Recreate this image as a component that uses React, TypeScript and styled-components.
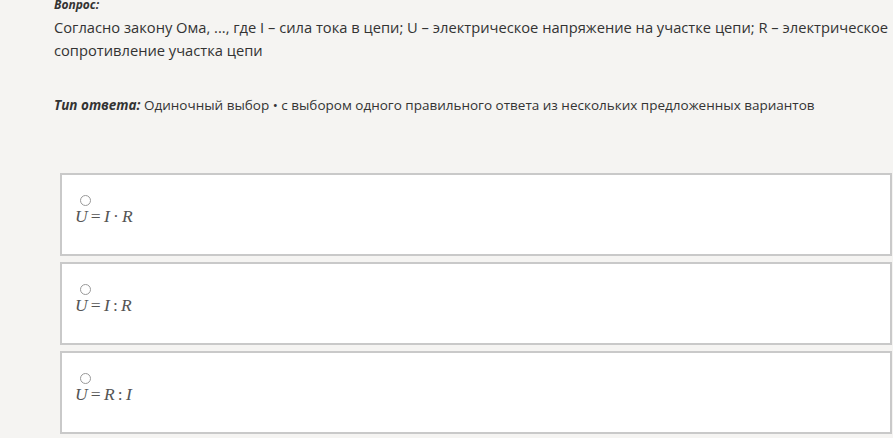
import React from "react";
import styled, { createGlobalStyle } from "styled-components";

const Global = createGlobalStyle`
  html, body { margin: 0; padding: 0; background: #f5f4f2; }
  body { overflow: hidden; }
`;

const Page = styled.div`
  width: 893px;
  height: 438px;
  background: #f5f4f2;
  font-family: "Open Sans", "Noto Sans", sans-serif;
  color: #333;
  overflow: hidden;
`;

const Header = styled.div`
  padding-left: 54px;
  margin-top: -7px;
  font-size: 14.7px;
  line-height: 23px;
`;

const Label = styled.div`
  font-weight: 700;
  font-style: italic;
  font-size: 12px;
`;

const Question = styled.div`
  white-space: nowrap;
`;

const AnswerType = styled.div`
  margin-top: 32px;
  font-size: 13.5px;
  white-space: nowrap;
  b { font-style: italic; font-weight: 700; }
`;

const List = styled.div`
  margin-top: 56px;
  margin-left: 60px;
  width: 832px;
  display: flex;
  flex-direction: column;
  gap: 6px;
`;

const Option = styled.label`
  box-sizing: border-box;
  height: 83px;
  background: #fff;
  border: 2px solid #c9c9c9;
  padding: 20px 0 0 13px;
  display: flex;
  flex-direction: column;
  align-items: flex-start;
`;

const Radio = styled.span`
  box-sizing: border-box;
  width: 11px;
  height: 11px;
  margin-left: 5px;
  border: 1px solid #999;
  border-radius: 50%;
  background: #fff;
`;

const Formula = styled.span`
  font-family: "Liberation Serif", "DejaVu Serif", serif;
  font-style: italic;
  font-size: 17.5px;
  line-height: 20px;
  color: #555;
  letter-spacing: 0.2px;
`;

const Op = styled.span`
  font-style: normal;
  margin: 0 3px;
`;

const options: [string, string, string][] = [
  ["I", "·", "R"],
  ["I", ":", "R"],
  ["R", ":", "I"],
];

export default function App() {
  return (
    <Page>
      <Global />
      <Header>
        <Label>Вопрос:</Label>
        <Question>
          Согласно закону Ома, ..., где I – сила тока в цепи; U – электрическое напряжение на участке цепи; R – электрическое
        </Question>
        <div>сопротивление участка цепи</div>
        <AnswerType>
          <b>Тип ответа:</b> Одиночный выбор • с выбором одного правильного ответа из нескольких предложенных вариантов
        </AnswerType>
      </Header>
      <List>
        {options.map(([a, op, b], i) => (
          <Option key={i}>
            <Radio />
            <Formula>
              U<Op>=</Op>
              {a}
              <Op>{op}</Op>
              {b}
            </Formula>
          </Option>
        ))}
      </List>
    </Page>
  );
}
